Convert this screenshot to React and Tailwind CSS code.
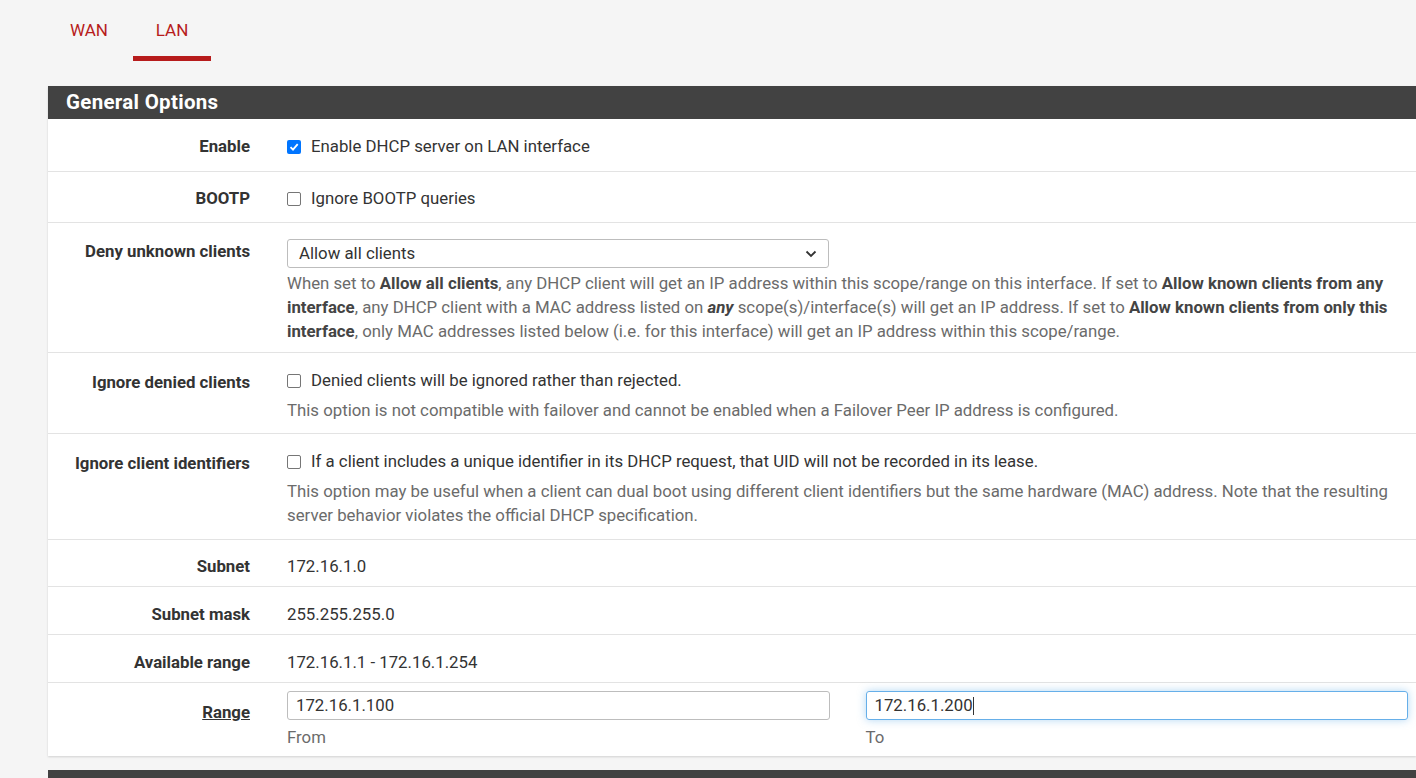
export default function App() {
  const f = { fontFamily: "Roboto, 'Liberation Sans', sans-serif" };
  const Row = ({ label, children, className = "", labelClass = "" }) => (
    <div className={"flex border-t border-[#e3e3e3] " + className}>
      <div className={"w-[202px] shrink-0 text-right font-bold text-[16.8px] text-[#333] " + labelClass}>{label}</div>
      <div className="flex-1 ml-[37px] pr-[8px] text-[16.8px] text-[#333]">{children}</div>
    </div>
  );
  const Cb = ({ checked }) =>
    checked ? (
      <span className="inline-flex w-[14px] h-[14px] rounded-[2px] bg-[#0075ff] items-center justify-center mr-[10px] shrink-0">
        <svg width="10" height="10" viewBox="0 0 10 10"><path d="M1.5 5.2 L4 7.7 L8.7 2.2" stroke="white" strokeWidth="1.8" fill="none" /></svg>
      </span>
    ) : (
      <span className="inline-block w-[14px] h-[14px] rounded-[2px] border border-[#767676] bg-white mr-[10px] shrink-0" />
    );
  const help = "text-[#6b6b6b] leading-[24px]";
  return (
    <div style={f} className="bg-[#f5f5f5] w-[1416px] h-[778px] overflow-hidden relative">
      <div className="flex h-[61px] pl-[70px]">
        <div className="text-[#b71c1c] text-[17px] pt-[18px] w-[63px]">WAN</div>
        <div className="w-[78px] flex flex-col items-center pt-[18px] text-[#b71c1c] text-[17px] border-b-[5px] border-[#b71c1c]">LAN</div>
      </div>
      <div className="ml-[48px] mt-[25px] bg-white shadow-[0_1px_2px_rgba(0,0,0,0.15)]">
        <div className="h-[33px] bg-[#424242] text-white font-bold text-[20.5px] pl-[18px] flex items-center tracking-[0.3px]">General Options</div>
        <Row label="Enable" className="h-[52px] items-center pt-[4px] !border-t-0">
          <div className="flex items-center"><Cb checked />Enable DHCP server on LAN interface</div>
        </Row>
        <Row label="BOOTP" className="h-[51px] items-center pt-[4px]">
          <div className="flex items-center"><Cb />Ignore BOOTP queries</div>
        </Row>
        <Row label="Deny unknown clients" className="h-[130px] pt-[16px]" labelClass="pt-[0px]">
          <div className="w-[542px] h-[29px] border border-[#bdbdbd] rounded-[3px] flex items-center justify-between px-[11px]">
            <span>Allow all clients</span>
            <svg width="12" height="8" viewBox="0 0 12 8"><path d="M1.5 1.5 L6 6 L10.5 1.5" stroke="#333" strokeWidth="1.8" fill="none" /></svg>
          </div>
          <div className={help + " mt-[3px]"}>
            When set to <b className="text-[#444]">Allow all clients</b>, any DHCP client will get an IP address within this scope/range on this interface. If set to <b className="text-[#444]">Allow known clients from any interface</b>, any DHCP client with a MAC address listed on <b className="italic text-[#444]">any</b> scope(s)/interface(s) will get an IP address. If set to <b className="text-[#444]">Allow known clients from only this interface</b>, only MAC addresses listed below (i.e. for this interface) will get an IP address within this scope/range.
          </div>
        </Row>
        <Row label="Ignore denied clients" className="h-[81px] pt-[17px]">
          <div className="flex items-center h-[22px]"><Cb />Denied clients will be ignored rather than rejected.</div>
          <div className={help + " mt-[6px]"}>This option is not compatible with failover and cannot be enabled when a Failover Peer IP address is configured.</div>
        </Row>
        <Row label="Ignore client identifiers" className="h-[106px] pt-[17px]">
          <div className="flex items-center h-[22px]"><Cb />If a client includes a unique identifier in its DHCP request, that UID will not be recorded in its lease.</div>
          <div className={help + " mt-[6px]"}>This option may be useful when a client can dual boot using different client identifiers but the same hardware (MAC) address. Note that the resulting server behavior violates the official DHCP specification.</div>
        </Row>
        <Row label="Subnet" className="h-[47px] items-center pt-[8px]">172.16.1.0</Row>
        <Row label="Subnet mask" className="h-[48px] items-center pt-[8px]">255.255.255.0</Row>
        <Row label="Available range" className="h-[48px] items-center pt-[8px]">172.16.1.1 - 172.16.1.254</Row>
        <Row label="Range" className="h-[74px] pt-[8px]" labelClass="underline pt-[9px]">
          <div className="flex gap-[36px]">
            <div className="flex-1">
              <div className="h-[29px] border border-[#bdbdbd] rounded-[3px] flex items-center px-[8px]">172.16.1.100</div>
              <div className="text-[#6b6b6b] mt-[5px]">From</div>
            </div>
            <div className="flex-1">
              <div className="h-[29px] border border-[#66afe9] rounded-[3px] flex items-center px-[8px] shadow-[0_0_8px_rgba(102,175,233,0.5)]">172.16.1.200<span className="inline-block w-[1px] h-[18px] bg-[#333]" /></div>
              <div className="text-[#6b6b6b] mt-[5px]">To</div>
            </div>
          </div>
        </Row>
      </div>
      <div className="ml-[48px] mt-[14px] h-[20px] bg-[#424242]" />
    </div>
  );
}
